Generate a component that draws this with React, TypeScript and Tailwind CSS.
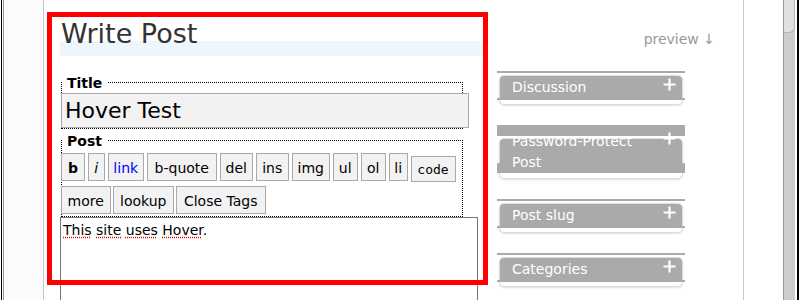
import React from 'react';

const tagButtons = [
  { label: 'b', w: 'w-[24px]', cls: 'font-bold' },
  { label: 'i', w: 'w-[17.5px]', cls: 'italic' },
  { label: 'link', w: 'w-[36.5px]', cls: 'text-[#0000ff]' },
  { label: 'b-quote', w: 'w-[70.5px]', cls: '' },
  { label: 'del', w: 'w-[33.5px]', cls: '' },
  { label: 'ins', w: 'w-[33.5px]', cls: '' },
  { label: 'img', w: 'w-[38.5px]', cls: '' },
  { label: 'ul', w: 'w-[25.5px]', cls: '' },
  { label: 'ol', w: 'w-[25.5px]', cls: '' },
  { label: 'li', w: 'w-[19.5px]', cls: '' },
];

const moreButtons = [
  { label: 'more', w: 'w-[49.5px]' },
  { label: 'lookup', w: 'w-[60.5px]' },
  { label: 'Close Tags', w: 'w-[89.5px]' },
];

function Plus() {
  return (
    <svg width="13" height="13" viewBox="0 0 13 13" className="absolute right-[9px] top-[7px] z-20">
      <path d="M6.5 0.5v12M0.5 6.5h12" stroke="#fff" strokeWidth="2.2" />
    </svg>
  );
}

function SideBox({ title, twoLine }: { title: string; twoLine?: boolean }) {
  return (
    <div className="relative w-[188px]">
      <div className={twoLine ? 'relative z-10 h-[11px] bg-[#aaa]' : 'h-[2px] bg-[#aaa]'} />
      <div className="mx-[2px] mt-[2px] rounded-[5px] border border-[#ddd] bg-white shadow-[0_1px_2px_rgba(0,0,0,0.12)]">
        <div
          className={`flow-root rounded-t-[4px] bg-[#aaa] pl-[12px] pr-[24px] text-[14px] leading-[21px] text-white ${
            twoLine ? 'h-[24px]' : 'h-[22px]'
          }`}
        >
          <div className={twoLine ? 'relative z-[5] -mt-[8px]' : 'pt-[1px]'}>{title}</div>
        </div>
        <div className={`-mx-[3px] bg-[#aaa] ${twoLine ? 'h-[10px]' : 'h-[2px]'}`} />
        <div className={twoLine ? 'h-[5px]' : 'h-[4px]'} />
      </div>
      <Plus />
    </div>
  );
}

export default function App() {
  return (
    <div className="relative flex h-[300px] w-[800px] overflow-hidden bg-white font-['DejaVu_Sans',sans-serif] text-black">
      {/* window frame, left */}
      <div className="w-[1px] bg-white" />
      <div className="w-[1px] bg-black" />
      <div className="w-[1px] bg-white" />
      <div className="w-[1px] bg-[#9a9a9a]" />
      <div className="w-[39px] bg-[#fbfbfb]" />
      <div className="w-[1px] bg-[#c8c8c8]" />

      {/* page */}
      <div className="flex w-[699px] pl-[16px]">
        {/* main column */}
        <div className="w-[426px] pt-[19px]">
          <h2 className="relative pl-[1px] text-[27px] leading-[30px] text-[#333]">Write Post</h2>
          <div className="-mt-[8px] h-[15px] bg-[#eef6fd]" />

          <fieldset className="ml-[1px] mt-[17px] w-[402px] min-w-0 border border-dotted border-black">
            <legend className="px-[5px] pt-[2px] text-[14px] font-bold leading-[17px]">Title</legend>
            <input
              defaultValue="Hover Test"
              className="-ml-[1px] mt-[1px] block h-[35px] w-[408px] border border-[#aaa] bg-[#f2f2f2] pl-[3px] text-[22px] text-black outline-none"
            />
          </fieldset>

          <fieldset className="ml-[1px] mt-[2px] w-[402px] min-w-0 border border-dotted border-black pb-[2px]">
            <legend className="px-[5px] pt-[2px] text-[14px] font-bold leading-[17px]">Post</legend>
            <div className="-ml-[1px] mt-[3px] flex items-start gap-[2.5px]">
              {tagButtons.map((b) => (
                <div
                  key={b.label}
                  className={`flex h-[28px] shrink-0 items-center justify-center border border-[#aaa] bg-[#f2f2f2] pt-[2px] text-[14px] leading-[17px] ${b.w} ${b.cls}`}
                >
                  {b.label}
                </div>
              ))}
              <div className="mt-[3px] flex h-[26px] w-[45px] shrink-0 items-center justify-center border border-[#aaa] bg-[#f2f2f2] font-['DejaVu_Sans_Mono',monospace] text-[13px] leading-[15px]">
                code
              </div>
            </div>
            <div className="-ml-[1px] mt-[4px] flex gap-[2.5px]">
              {moreButtons.map((b) => (
                <div
                  key={b.label}
                  className={`flex h-[28px] shrink-0 items-center justify-center border border-[#aaa] bg-[#f2f2f2] pt-[2px] text-[14px] leading-[17px] ${b.w}`}
                >
                  {b.label}
                </div>
              ))}
            </div>
          </fieldset>

          <div className="h-[100px] w-[418px] border border-[#777] pl-[2px] pt-[4px] text-[14px] leading-[17px]">
            <span className="underline decoration-[#e00000] decoration-dotted underline-offset-[2px]">This</span>{' '}
            <span className="underline decoration-[#e00000] decoration-dotted underline-offset-[2px]">site</span>{' '}
            <span className="underline decoration-[#e00000] decoration-dotted underline-offset-[2px]">uses</span>{' '}
            <span className="underline decoration-[#e00000] decoration-dotted underline-offset-[2px]">Hover</span>.
          </div>
        </div>

        {/* sidebar */}
        <div className="ml-[11px] w-[218px] pt-[31px]">
          <div className="text-right text-[14px] leading-[17px] text-[#999]">preview ↓</div>
          <div className="mt-[23px] flex flex-col gap-[20px]">
            <SideBox title="Discussion" />
            <SideBox title="Password-Protect Post" twoLine />
            <SideBox title="Post slug" />
            <SideBox title="Categories" />
          </div>
        </div>
      </div>

      {/* window frame, right */}
      <div className="w-[1px] bg-[#c8c8c8]" />
      <div className="w-[39px] bg-white" />
      <div className="w-[12px] border-l border-[#999] bg-[#cdcdcd]">
        <div className="h-[33px] rounded-br-[6px] border-b border-r border-[#b5b5b5] bg-[#e0e0e0]" />
      </div>
      <div className="w-[2px] bg-white" />
      <div className="w-[2px] bg-black" />
      <div className="w-[1px] bg-white" />

      {/* red highlight around the post form */}
      <div className="pointer-events-none absolute left-[47px] top-[12px] h-[273px] w-[441px] border-[5px] border-[#ff0000]" />
    </div>
  );
}
